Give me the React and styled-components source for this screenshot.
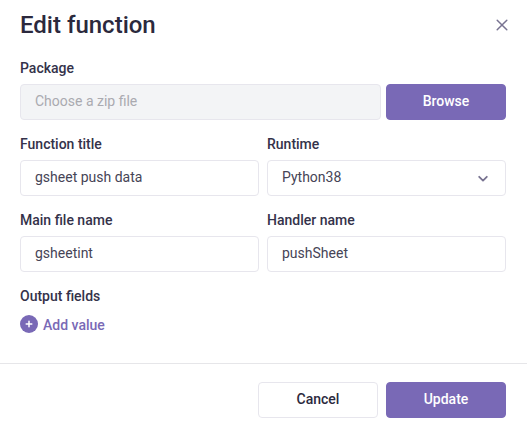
import React from 'react';
import styled, { createGlobalStyle } from 'styled-components';

const GlobalStyle = createGlobalStyle`
  * { box-sizing: border-box; }
  body {
    margin: 0;
    background: #fff;
    color: #34324a;
    font-family: Roboto, "Liberation Sans", sans-serif;
    overflow: hidden;
  }
`;

const Dialog = styled.section`
  display: flex;
  flex-direction: column;
  width: 527px;
  height: 430px;
`;

const Header = styled.header`
  display: flex;
  justify-content: space-between;
  height: 58px;
  padding: 9px 18px 0 20px;
`;

const Title = styled.h1`
  margin: 0;
  color: #2b293d;
  font-size: 24px;
  font-weight: 500;
  line-height: 32px;
`;

const CloseButton = styled.button`
  display: flex;
  align-items: center;
  justify-content: center;
  width: 14px;
  height: 14px;
  margin-top: 9px;
  padding: 0;
  border: 0;
  background: none;
  color: #787391;
`;

const Form = styled.form`
  display: flex;
  flex-direction: column;
  gap: 14px;
  height: 305px;
  padding: 0 21px 0 20px;
`;

const FieldRow = styled.div`
  display: grid;
  grid-template-columns: 1fr 1fr;
  gap: 8px;
`;

const Field = styled.div`
  display: flex;
  flex-direction: column;
  gap: ${({ $gap = 6 }) => $gap}px;
  min-width: 0;
`;

const Label = styled.label`
  font-size: 14px;
  font-weight: 500;
  line-height: 20px;
`;

const UploadRow = styled.div`
  display: flex;
  gap: 5px;
`;

const Input = styled.input`
  flex: 1;
  width: 100%;
  min-width: 0;
  height: 36px;
  min-height: 36px;
  padding: 0 14px 2px;
  border: 1px solid #e7e6ed;
  border-radius: 4px;
  outline: 0;
  background: #fff;
  color: #464456;
  font: 400 14px/20px Roboto, "Liberation Sans", sans-serif;

  &:disabled { background: #f3f4f6; }
  &::placeholder { color: #aaaab0; opacity: 1; }
`;

const Select = styled.div`
  display: flex;
  align-items: center;
  justify-content: space-between;
  height: 36px;
  padding: 0 17px 0 14px;
  border: 1px solid #e7e6ed;
  border-radius: 4px;
  color: #464456;
  font-size: 14px;
  line-height: 20px;
`;

const SelectValue = styled.span`
  padding-bottom: 2px;
`;

const Chevron = styled.svg`
  margin-top: 2px;
  color: #787391;
`;

const Button = styled.button`
  flex: none;
  width: 120px;
  height: 36px;
  padding: 0 0 2px;
  border: 1px solid ${({ $primary }) => ($primary ? '#7969b6' : '#e7e6ed')};
  border-radius: 4px;
  background: ${({ $primary }) => ($primary ? '#7969b6' : '#fff')};
  color: ${({ $primary }) => ($primary ? '#fff' : '#2b293d')};
  font: 500 14px/20px Roboto, "Liberation Sans", sans-serif;
`;

const AddButton = styled.button`
  display: flex;
  align-items: flex-start;
  align-self: flex-start;
  gap: 5px;
  padding: 0;
  border: 0;
  background: none;
  color: #7969b6;
  font: 500 14px/20px Roboto, "Liberation Sans", sans-serif;
`;

const Footer = styled.footer`
  display: flex;
  justify-content: flex-end;
  gap: 8px;
  padding: 18px 21px 0;
  border-top: 1px solid #e6e6e9;
`;

export default function App() {
  return (
    <>
      <GlobalStyle />
      <Dialog>
        <Header>
          <Title>Edit function</Title>
          <CloseButton aria-label="Close">
            <svg width="14" height="14" viewBox="0 0 14 14" fill="none">
              <path d="M2.2 2.2l9.6 9.6M11.8 2.2L2.2 11.8" stroke="currentColor" strokeWidth="1.5" strokeLinecap="round" />
            </svg>
          </CloseButton>
        </Header>
        <Form>
          <Field>
            <Label htmlFor="package">Package</Label>
            <UploadRow>
              <Input id="package" placeholder="Choose a zip file" disabled />
              <Button type="button" $primary>Browse</Button>
            </UploadRow>
          </Field>
          <FieldRow>
            <Field>
              <Label htmlFor="title">Function title</Label>
              <Input id="title" defaultValue="gsheet push data" />
            </Field>
            <Field>
              <Label>Runtime</Label>
              <Select>
                <SelectValue>Python38</SelectValue>
                <Chevron width="10" height="8" viewBox="0 0 10 8" fill="none">
                  <path d="M1.2 1.8L5 5.6l3.8-3.8" stroke="currentColor" strokeWidth="1.8" strokeLinecap="round" strokeLinejoin="round" />
                </Chevron>
              </Select>
            </Field>
          </FieldRow>
          <FieldRow>
            <Field>
              <Label htmlFor="file">Main file name</Label>
              <Input id="file" defaultValue="gsheetint" />
            </Field>
            <Field>
              <Label htmlFor="handler">Handler name</Label>
              <Input id="handler" defaultValue="pushSheet" />
            </Field>
          </FieldRow>
          <Field $gap={9}>
            <Label as="div">Output fields</Label>
            <AddButton type="button">
              <svg width="18" height="18" viewBox="0 0 18 18">
                <circle cx="9" cy="9" r="9" fill="currentColor" />
                <path d="M9 6.2v5.6M6.2 9h5.6" stroke="#fff" strokeWidth="1.5" strokeLinecap="round" />
              </svg>
              Add value
            </AddButton>
          </Field>
        </Form>
        <Footer>
          <Button>Cancel</Button>
          <Button $primary>Update</Button>
        </Footer>
      </Dialog>
    </>
  );
}
